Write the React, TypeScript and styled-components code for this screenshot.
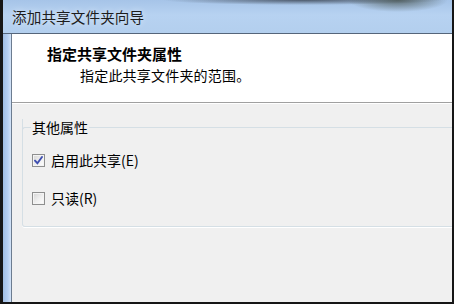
import styled, { createGlobalStyle } from 'styled-components'

const GlobalStyle = createGlobalStyle`
  html, body {
    margin: 0;
    padding: 0;
    background: #1b1b1b;
  }
  body {
    font-family: "Noto Sans CJK SC", "Noto Sans", sans-serif;
  }
`

const Window = styled.div`
  width: 454px;
  height: 304px;
  box-sizing: border-box;
  padding: 0 2px 2px 3px;
  background: #161616;
  display: flex;
  flex-direction: column;
  overflow: hidden;
`

const TitleBar = styled.div`
  height: 33px;
  flex-shrink: 0;
  display: flex;
  align-items: center;
  padding-left: 9px;
  background:
    radial-gradient(ellipse 50px 12px at 395px 0px, rgba(60, 70, 60, 0.7), rgba(60, 70, 60, 0) 100%),
    radial-gradient(ellipse 140px 5px at 300px 0px, rgba(40, 46, 56, 0.7), rgba(40, 46, 56, 0) 100%),
    linear-gradient(180deg, #a6c4e8 0%, #b7d2f1 45%, #b3cfee 100%);
  border-bottom: 1px solid #55657a;
  color: #1c1c1c;
  font-size: 14.6px;
  letter-spacing: 0.1px;
  text-shadow: 0 0 6px rgba(255, 255, 255, 0.6);
`

const Body = styled.div`
  flex: 1;
  display: flex;
  min-height: 0;
`

const SideFrame = styled.div`
  width: 8px;
  flex-shrink: 0;
  background: linear-gradient(90deg, #9fbde3 0%, #b6cff0 60%, #d3e3f7 100%);
`

const Client = styled.div`
  flex: 1;
  min-width: 0;
  display: flex;
  flex-direction: column;
  border-left: 1px solid #6c7c90;
  overflow: hidden;
`

const Header = styled.div`
  height: 68px;
  flex-shrink: 0;
  box-sizing: border-box;
  background: #ffffff;
  padding: 10px 0 0 35px;
`

const HeaderTitle = styled.div`
  font-size: 15px;
  font-weight: 700;
  line-height: 20px;
  color: #000;
`

const HeaderSub = styled.div`
  margin: 2px 0 0 33px;
  font-size: 14px;
  line-height: 18px;
  color: #000;
  letter-spacing: 0.2px;
`

const Divider = styled.div`
  height: 0;
  flex-shrink: 0;
  border-top: 1px solid #a0a0a0;
  border-bottom: 1px solid #ffffff;
`

const Content = styled.div`
  flex: 1;
  background: #f0f0f0;
  padding: 15px 0 0 10px;
  overflow: hidden;
`

const GroupBox = styled.div`
  width: 470px;
  box-sizing: border-box;
  padding: 0 0 18px 8px;
  border: 1px solid #d5dfe5;
  border-top: none;
  border-radius: 0 0 3px 3px;
  box-shadow: 0 1px 0 #ffffff;
  display: flex;
  flex-direction: column;
  gap: 18px;
`

const LegendRow = styled.div`
  display: flex;
  align-items: center;
  height: 16px;
  margin: 0 0 -3px -9px;
`

const LegendLine = styled.div<{ $grow?: boolean }>`
  height: 8px;
  align-self: flex-end;
  box-sizing: border-box;
  border-top: 1px solid #d5dfe5;
  ${p => (p.$grow ? 'flex: 1;' : 'width: 9px; border-left: 1px solid #d5dfe5; border-top-left-radius: 3px;')}
`

const Legend = styled.span`
  padding: 0 1px;
  font-size: 14px;
  line-height: 16px;
  color: #000;
`

const Row = styled.label`
  display: flex;
  align-items: center;
  height: 20px;
  gap: 6px;
  font-size: 14px;
  color: #000;
`

const Box = styled.span`
  width: 13px;
  height: 13px;
  margin-left: 1px;
  box-sizing: border-box;
  border: 1px solid #8e8f8f;
  background: linear-gradient(135deg, #d4d4d4 0%, #f0f0f0 55%, #ffffff 100%);
  box-shadow: inset 0 0 0 1px #f4f4f4;
  display: flex;
  align-items: center;
  justify-content: center;
`

const Check = () => (
  <svg width="9" height="9" viewBox="0 0 9 9">
    <path d="M1 4.6 L3.4 7.2 L8 1" fill="none" stroke="#3f4fb0" strokeWidth="1.9" strokeLinecap="round" />
  </svg>
)

function CheckItem({ label, checked }: { label: string; checked?: boolean }) {
  return (
    <Row>
      <Box>{checked && <Check />}</Box>
      {label}
    </Row>
  )
}

export default function App() {
  return (
    <>
      <GlobalStyle />
      <Window>
        <TitleBar>添加共享文件夹向导</TitleBar>
        <Body>
          <SideFrame />
          <Client>
            <Header>
              <HeaderTitle>指定共享文件夹属性</HeaderTitle>
              <HeaderSub>指定此共享文件夹的范围。</HeaderSub>
            </Header>
            <Divider />
            <Content>
              <GroupBox>
                <LegendRow>
                  <LegendLine />
                  <Legend>其他属性</Legend>
                  <LegendLine $grow />
                </LegendRow>
                <CheckItem label="启用此共享(E)" checked />
                <CheckItem label="只读(R)" />
              </GroupBox>
            </Content>
          </Client>
        </Body>
      </Window>
    </>
  )
}
